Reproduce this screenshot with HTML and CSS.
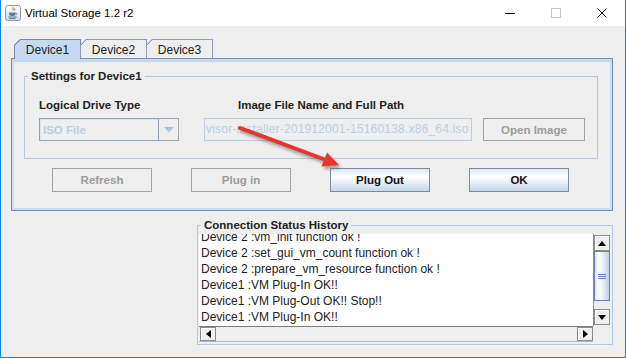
FILE: index.html
```html
<!DOCTYPE html>
<html>
<head>
<meta charset="utf-8">
<link rel="stylesheet" href="styles.css">
</head>
<body>
<div class="window">
  <div class="titlebar">
    <svg class="app-icon" width="16" height="16" viewBox="0 0 16 16">
      <defs>
        <linearGradient id="ig" x1="0" y1="0" x2="0" y2="1">
          <stop offset="0" stop-color="#ffffff"/>
          <stop offset="1" stop-color="#d3dae3"/>
        </linearGradient>
      </defs>
      <rect x="0.5" y="0.5" width="15" height="15" rx="2" fill="url(#ig)" stroke="#8e9bab"/>
      <path d="M8.2 2.2c-1.6 1.2 1.2 1.9-.3 3.4M9.8 3.3c-1.1.8.7 1.2-.2 2.2" fill="none" stroke="#e76f00" stroke-width="1"/>
      <path d="M4 7.6h6.6v1.3c0 1.3-1.3 2.1-3.3 2.1S4 10.2 4 8.9z" fill="#5382a1"/>
      <path d="M10.6 8.2c1.4-.3 1.6 1.2.2 1.5" fill="none" stroke="#5382a1" stroke-width=".9"/>
      <path d="M3.2 12h8.6M4.2 13.5h6.4" stroke="#5382a1" stroke-width="1"/>
    </svg>
    <span class="title">Virtual Storage 1.2 r2</span>
    <div class="controls">
      <div class="ctl"><span class="min-line"></span></div>
      <div class="ctl"><span class="max-box"></span></div>
      <div class="ctl">
        <svg width="10" height="10" viewBox="0 0 10 10"><path d="M0.5 0.5L9.5 9.5M9.5 0.5L0.5 9.5" stroke="#000" stroke-width="1"/></svg>
      </div>
    </div>
  </div>

  <div class="client">
    <div class="tabpane">
      <div class="tabs">
        <div class="tab selected">Device1</div>
        <div class="tab">Device2</div>
        <div class="tab">Device3</div>
      </div>
      <div class="panel">
        <fieldset class="group settings">
          <legend>Settings for Device1</legend>
          <div class="settings-body">
            <div class="labels-row">
              <div class="lbl lbl-type">Logical Drive Type</div>
              <div class="lbl">Image File Name and Full Path</div>
            </div>
            <div class="controls-row">
              <div class="combo">
                <div class="combo-text">ISO File</div>
                <div class="combo-btn">
                  <svg width="10" height="6" viewBox="0 0 10 6"><path d="M0 0h10L5 5.5z" fill="#a9c3e2"/></svg>
                </div>
              </div>
              <div class="textfield">visor-installer-201912001-15160138.x86_64.iso</div>
              <div class="btn disabled open-btn">Open Image</div>
            </div>
          </div>
        </fieldset>
        <div class="btnrow">
          <div class="btn disabled">Refresh</div>
          <div class="btn disabled">Plug in</div>
          <div class="btn">Plug Out</div>
          <div class="btn">OK</div>
        </div>
      </div>
    </div>

    <fieldset class="group history">
      <legend>Connection Status History</legend>
      <div class="history-body">
        <div class="scrollpane">
          <div class="viewport">
            <div class="log">
              <div>Device 2 :vm_init function ok !</div>
              <div>Device 2 :set_gui_vm_count function ok !</div>
              <div>Device 2 :prepare_vm_resource function ok !</div>
              <div>Device1 :VM Plug-In OK!!</div>
              <div>Device1 :VM Plug-Out OK!! Stop!!</div>
              <div>Device1 :VM Plug-In OK!!</div>
            </div>
          </div>
          <div class="vbar">
            <div class="sbtn"><svg width="8" height="5" viewBox="0 0 8 5"><path d="M0 5h8L4 0z" fill="#000"/></svg></div>
            <div class="thumb"><span class="grip"></span></div>
            <div class="track"></div>
            <div class="sbtn"><svg width="8" height="5" viewBox="0 0 8 5"><path d="M0 0h8L4 5z" fill="#000"/></svg></div>
          </div>
          <div class="hbar">
            <div class="sbtn"><svg width="5" height="8" viewBox="0 0 5 8"><path d="M5 0v8L0 4z" fill="#000"/></svg></div>
            <div class="track"></div>
            <div class="sbtn"><svg width="5" height="8" viewBox="0 0 5 8"><path d="M0 0v8L5 4z" fill="#000"/></svg></div>
          </div>
          <div class="corner"></div>
        </div>
      </div>
    </fieldset>
  </div>

  <svg class="annotation" width="626" height="358" viewBox="0 0 626 358">
    <defs>
      <filter id="blur" x="-20%" y="-50%" width="140%" height="200%">
        <feGaussianBlur stdDeviation="1.6"/>
      </filter>
    </defs>
    <g transform="translate(2,3)" filter="url(#blur)" opacity="0.5">
      <line x1="240" y1="128" x2="326" y2="160" stroke="#555" stroke-width="4" stroke-linecap="round"/>
      <polygon points="339,165 321.5,166.5 327,152.5" fill="#555"/>
    </g>
    <line x1="240" y1="128" x2="326" y2="160" stroke="#e8352c" stroke-width="4" stroke-linecap="round"/>
    <polygon points="339,165 321.5,166.5 327,152.5" fill="#e8352c"/>
  </svg>
</div>
</body>
</html>
```

FILE: styles.css
```css
* { box-sizing: border-box; }

body {
  margin: 0;
  background: #ffffff;
  font-family: "Liberation Sans", Arial, sans-serif;
}

.window {
  width: 626px;
  height: 358px;
  border: 1px solid #1883d7;
  border-top: 0;
  display: flex;
  flex-direction: column;
  position: relative;
  background: #eeeeee;
  overflow: hidden;
}

/* title bar */
.titlebar {
  flex: none;
  height: 26px;
  background: #ffffff;
  display: flex;
  align-items: center;
}
.app-icon { margin-left: 4px; flex: none; }
.title {
  margin-left: 4px;
  font-size: 11.5px;
  color: #000;
}
.controls { margin-left: auto; display: flex; height: 26px; }
.ctl {
  width: 46px;
  height: 26px;
  display: flex;
  align-items: center;
  justify-content: center;
}
.min-line { width: 10px; height: 1px; background: #000; }
.max-box { width: 10px; height: 10px; border: 1px solid #c4c4c4; }

/* client area */
.client {
  flex: 1;
  padding: 13px 0 0 10px;
}

.tabpane { width: 602px; }

.tabs {
  display: flex;
  align-items: flex-start;
  height: 19px;
  padding-left: 3px;
  position: relative;
  z-index: 1;
}
.tab {
  width: 67px;
  height: 19px;
  margin-right: -1px;
  border: 1px solid #8d9ebd;
  border-bottom: 0;
  font-size: 12px;
  color: #222;
  display: flex;
  align-items: center;
  justify-content: center;
  padding-top: 1px;
  background: linear-gradient(135deg, transparent 4.1px, #8d9ebd 4.1px, #8d9ebd 5.3px, #eeeeee 5.3px);
  background-origin: border-box;
  clip-path: polygon(6px 0, 100% 0, 100% 100%, 0 100%, 0 6px);
}
.tab.selected {
  height: 20px;
  border-color: #7389b2;
  background: linear-gradient(135deg, transparent 4.1px, #7389b2 4.1px, #7389b2 5.3px, #c5daf0 5.3px);
  background-origin: border-box;
}

.panel {
  height: 153px;
  border: 1px solid #7d8fb0;
  padding: 3px 2px 2px 2px;
  box-shadow: inset 0 3px 0 #c5daf0, inset 2px 0 0 #cadcf0, inset -2px 0 0 #cadcf0, inset 0 -2px 0 #cadcf0;
}

/* titled borders */
.group {
  margin: 0;
  padding: 0;
  border: 1px solid #b0c9e5;
  min-width: 0;
}
.group legend {
  margin-left: 3px;
  padding: 0 3px;
  font-size: 11.5px;
  font-weight: bold;
  line-height: 14px;
  color: #222;
}

.settings { margin: 7px 12px 0 10px; }
.settings-body { padding: 15px 0 17px 14px; }

.labels-row { display: flex; height: 14px; }
.lbl {
  font-size: 11.5px;
  font-weight: bold;
  line-height: 14px;
  color: #222;
  white-space: nowrap;
}
.lbl-type { width: 199px; }

.controls-row { display: flex; margin-top: 6px; height: 23px; }

.combo { display: flex; width: 140px; height: 23px; margin-right: 25px; }
.combo-text {
  flex: 1;
  border: 1px solid #8ea2bf;
  box-shadow: inset 1px 1px 0 #dbe5f0;
  color: #b8cfe5;
  font-size: 11.5px;
  font-weight: bold;
  padding-left: 3px;
  display: flex;
  align-items: center;
}
.combo-btn {
  width: 20px;
  border: 1px solid #a5a5a5;
  border-left: 0;
  display: flex;
  align-items: center;
  justify-content: center;
}

.textfield {
  width: 268px;
  margin-right: 11px;
  border: 1px solid #b8cfe5;
  color: #b8cfe5;
  font-size: 12px;
  letter-spacing: 0.2px;
  line-height: 21px;
  padding-left: 1px;
  white-space: nowrap;
  overflow: hidden;
}

.btn {
  width: 100px;
  height: 24px;
  border: 1px solid #7a8a99;
  background: linear-gradient(#dde8f3, #ffffff 35%, #eef3f9 55%, #c3d6eb);
  color: #111;
  font-size: 11.5px;
  font-weight: bold;
  display: flex;
  align-items: center;
  justify-content: center;
}
.btn.disabled {
  border-color: #a3a3a3;
  background: #eeeeee;
  color: #9c9c9c;
}
.open-btn { width: 102px; height: 23px; }

.btnrow {
  display: flex;
  gap: 39px;
  margin: 9px 0 0 38px;
}

/* history */
.history {
  margin: 7px 0 0 186px;
  width: 416px;
}
.history-body { padding: 2px 2px 2px 1px; }

.scrollpane {
  height: 108px;
  display: grid;
  grid-template-columns: 1fr 17px;
  grid-template-rows: 1fr 16px;
}
.viewport {
  background: #ffffff;
  overflow: hidden;
}
.log {
  margin-top: -5px;
  padding-left: 2px;
  font-size: 12px;
  line-height: 16px;
  color: #222;
  white-space: nowrap;
}

.sbtn {
  flex: none;
  width: 16px;
  height: 16px;
  background: #eeeeee;
  border: 1px solid #8c8c8c;
  box-shadow: inset 1px 1px 0 #ffffff;
  display: flex;
  align-items: center;
  justify-content: center;
}

.vbar {
  display: flex;
  flex-direction: column;
  background: #eeeeee;
  border-left: 1px solid #8c8c8c;
  padding-top: 1px;
}
.thumb {
  flex: none;
  width: 16px;
  height: 50px;
  border: 1px solid #6382bf;
  background: linear-gradient(to right, #dde8f3 0%, #ffffff 30%, #e4edf7 60%, #b8cfe5 100%);
  display: flex;
  align-items: center;
  justify-content: center;
}
.grip {
  width: 8px;
  height: 5px;
  border-top: 1px solid #6382bf;
  border-bottom: 1px solid #6382bf;
  background: linear-gradient(#6382bf, #6382bf) center / 100% 1px no-repeat;
}
.track { flex: 1; }
.vbar .sbtn:last-child { margin-bottom: 1px; }

.hbar {
  display: flex;
  background: #eeeeee;
  border-top: 1px solid #7d7d7d;
  border-bottom: 1px solid #b5b5b5;
  padding-left: 1px;
}
.hbar .sbtn { height: 14px; }
.corner { background: #eeeeee; }

.annotation {
  position: absolute;
  left: -1px;
  top: 0;
  pointer-events: none;
}
```
